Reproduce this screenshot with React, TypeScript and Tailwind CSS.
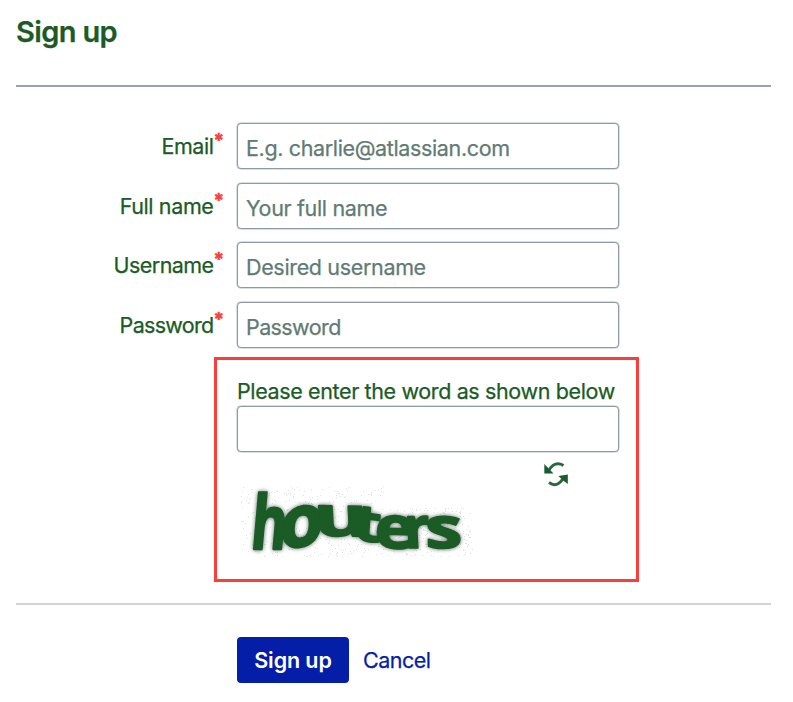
const FONT = "font-['Inter','Liberation_Sans',sans-serif]";

const FIELDS = [
  { label: 'Email', placeholder: 'E.g. charlie@atlassian.com', type: 'email', gap: 'mb-[14px]', tracking: 'placeholder:tracking-[-0.36px]', labelTracking: 'tracking-[-0.45px]' },
  { label: 'Full name', placeholder: 'Your full name', type: 'text', gap: 'mb-[13px]', tracking: 'placeholder:tracking-[-0.34px]', labelTracking: 'tracking-[-0.38px]' },
  { label: 'Username', placeholder: 'Desired username', type: 'text', gap: 'mb-[14px]', tracking: 'placeholder:tracking-[-0.34px]', labelTracking: 'tracking-[-0.57px]' },
  { label: 'Password', placeholder: 'Password', type: 'password', gap: 'mb-[9px]', tracking: 'placeholder:tracking-[-0.6px]', labelTracking: 'tracking-[-0.7px]' },
];

const INPUT =
  'block h-[46px] w-[382px] rounded-[4px] border border-[#8c9ba5] bg-white px-[8px] pt-[3px] text-[21.5px] text-[#5f7b74] shadow-[0_0_0_0.5px_#b4bfc4] outline-none placeholder:text-[#5f7b74] placeholder:opacity-100';

const LETTERS = [
  { ch: 'h', t: 'translate(249.5 548.5) skewX(-5) scale(0.83 1.13)' },
  { ch: 'o', t: 'translate(278.5 549.5) rotate(-8) skewX(-12) scale(1.08 1.08)' },
  { ch: 'u', t: 'translate(314.5 535.5) rotate(1) skewX(4) scale(1.26 0.83)' },
  { ch: 't', t: 'translate(352 539) rotate(8) skewX(4) scale(1 0.77)' },
  { ch: 'e', t: 'translate(374 547.5) rotate(2) scale(1.04 0.89)' },
  { ch: 'r', t: 'translate(405 548) skewX(3) scale(0.85 0.87)' },
  { ch: 's', t: 'translate(425.5 547.5) rotate(1) skewX(2) scale(1.13 0.86)' },
];

function Noise() {
  const dots = [];
  let seed = 17;
  const next = () => {
    seed = (seed * 16807) % 2147483647;
    return seed / 2147483647;
  };
  for (let i = 0; i < 600; i++) {
    const x = 241 + Math.floor(next() * 232);
    const top = x < 385 ? 486 : 508;
    const y = top + Math.floor(next() * (557 - top));
    dots.push(<rect key={i} x={x} y={y} width="1" height="1" />);
  }
  return <g fill="#dfe2e1">{dots}</g>;
}

function Captcha() {
  return (
    <svg
      className="block overflow-visible font-['Open_Sans','Noto_Sans',sans-serif] text-[66px] font-bold"
      width="240"
      height="108"
      viewBox="237 468 240 108"
    >
      <Noise />
      <g className="drop-shadow-[0_0_2px_#5d6d64]" fill="#1b5b25" stroke="#1b5b25" strokeWidth="2" strokeLinejoin="round">
        {LETTERS.map((l) => (
          <text key={l.ch} transform={l.t}>
            {l.ch}
          </text>
        ))}
      </g>
    </svg>
  );
}

function RefreshIcon() {
  return (
    <svg width="26" height="26" viewBox="543 461 26 26" fill="none">
      <g stroke="#2b6840" strokeWidth="3">
        <path d="M549 470 Q555 460.5 563.5 465.5" />
        <path d="M563.5 478 Q557 488.5 549 482.5" />
      </g>
      <path d="M544.3 464 L553.5 473.5 H544.3 Z" fill="#1b5b30" />
      <path d="M567.8 474.5 V484 L562.5 480 L558.5 476 Z" fill="#1b5b30" />
    </svg>
  );
}

export default function App() {
  return (
    <main className={`h-[702px] w-[793px] overflow-hidden bg-white px-4 text-[#1b5b25] [-webkit-text-stroke:0.25px] ${FONT}`}>
      <header className="h-[87px] w-[755px] border-b-2 border-[#98a5a8] pt-[14px]">
        <h1 className="text-[29px] font-semibold leading-[36px] tracking-[-0.65px]">Sign up</h1>
      </header>
      <form className="pt-[36px]">
        {FIELDS.map((f) => (
          <div key={f.label} className={`flex ${f.gap}`}>
            <label className="flex w-[221px] justify-end pr-[15.5px] text-[21.5px] leading-[46px]">
              <span className={f.labelTracking}>{f.label}</span>
              <span className="w-[8px] text-[19px] font-bold leading-[36px] text-[#fc3d39] [-webkit-text-stroke:0.5px]">*</span>
            </label>
            <input type={f.type} placeholder={f.placeholder} className={`${INPUT} ${f.tracking}`} />
          </div>
        ))}
        <section className="ml-[198px] h-[225px] w-[425px] border-3 border-[#fc3d39] pl-[20px] pt-[17px]">
          <label className="block h-[29px] whitespace-nowrap text-[21.5px] leading-[29px] tracking-[-0.37px]">Please enter the word as shown below</label>
          <input type="text" aria-label="Captcha" className={INPUT} />
          <div className="flex pt-[9px]">
            <div className="pt-[7px]">
              <Captcha />
            </div>
            <button type="button" aria-label="Refresh" className="ml-[66px] h-[26px]">
              <RefreshIcon />
            </button>
          </div>
        </section>
        <footer className="mt-[21px] flex w-[755px] items-center gap-[14px] border-t-2 border-[#cfd3d3] pl-[221px] pt-[32px] text-[21.5px]">
          <button type="button" className="h-[46px] w-[112px] rounded-[4px] bg-[#041ea8] font-semibold tracking-[-0.1px] text-white [-webkit-text-stroke:0]">Sign up</button>
          <a className="tracking-[-0.5px] text-[#041ea8]">Cancel</a>
        </footer>
      </form>
    </main>
  );
}
